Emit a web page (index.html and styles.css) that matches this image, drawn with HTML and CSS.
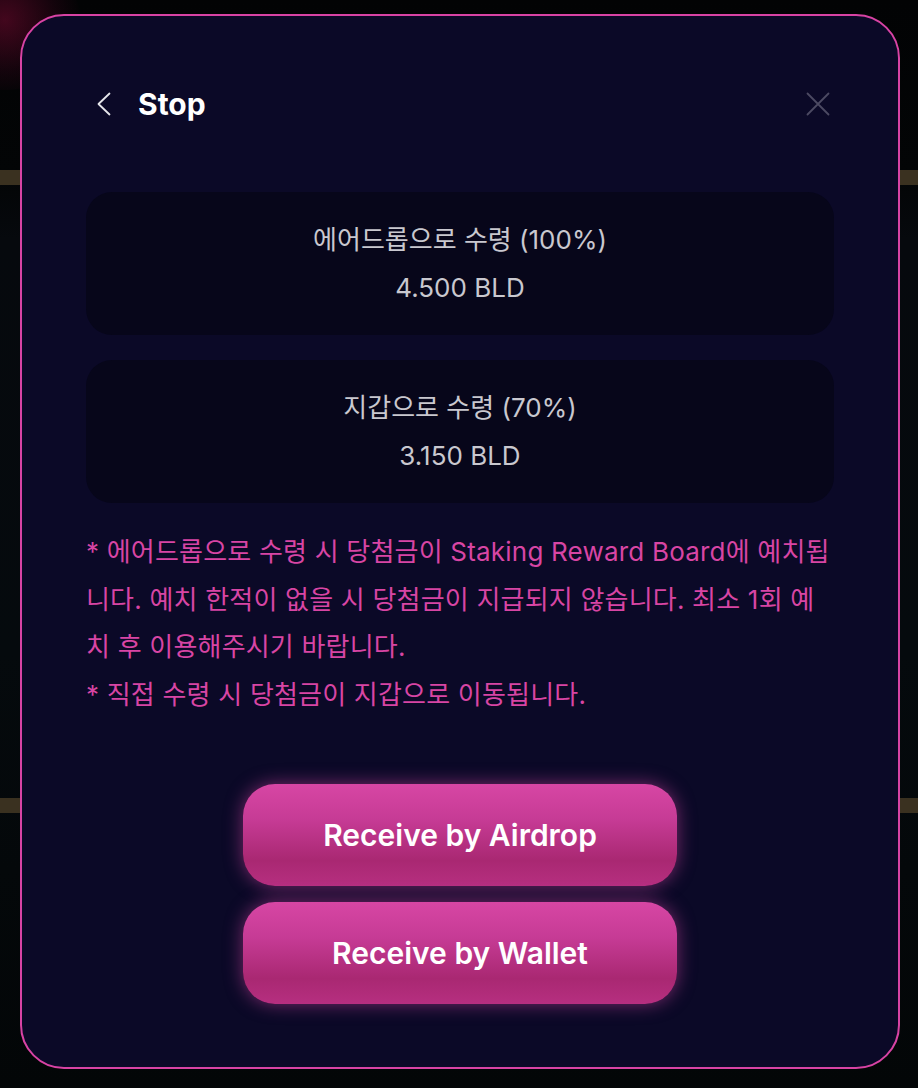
FILE: index.html
```html
<!DOCTYPE html>
<html lang="ko">
<head>
<meta charset="utf-8">
<title>Stop</title>
<link rel="stylesheet" href="styles.css">
</head>
<body>
<div class="backdrop">
  <div class="glow-blob"></div>
  <div class="band band-top"></div>
  <div class="band band-bottom"></div>
</div>
<div class="modal">
  <div class="header">
    <button class="icon-btn back" aria-label="back">
      <svg width="24" height="24" viewBox="0 0 24 24"><path d="M17.5 1.5 L6.5 12 L17.5 22.5" fill="none" stroke="#e6e6ea" stroke-width="1.8" stroke-linecap="round" stroke-linejoin="round"/></svg>
    </button>
    <h1 class="title">Stop</h1>
    <button class="icon-btn close" aria-label="close">
      <svg width="24" height="24" viewBox="0 0 24 24"><path d="M1.5 1.5 L22.5 22.5 M22.5 1.5 L1.5 22.5" fill="none" stroke="#4c4a62" stroke-width="1.8" stroke-linecap="round"/></svg>
    </button>
  </div>
  <div class="option">
    <div class="opt-label">에어드롭으로 수령 (100%)</div>
    <div class="opt-value">4.500 BLD</div>
  </div>
  <div class="option">
    <div class="opt-label">지갑으로 수령 (70%)</div>
    <div class="opt-value">3.150 BLD</div>
  </div>
  <div class="notes">
    <p>* 에어드롭으로 수령 시 당첨금이 Staking Reward Board에 예치됩니다. 예치 한적이 없을 시 당첨금이 지급되지 않습니다. 최소 1회 예치 후 이용해주시기 바랍니다.</p>
    <p>* 직접 수령 시 당첨금이 지갑으로 이동됩니다.</p>
  </div>
  <div class="actions">
    <button class="btn">Receive by Airdrop</button>
    <button class="btn">Receive by Wallet</button>
  </div>
</div>
</body>
</html>
```

FILE: styles.css
```css
* { box-sizing: border-box; }
html, body { margin: 0; padding: 0; }
body {
  width: 918px;
  height: 1088px;
  overflow: hidden;
  position: relative;
  background: linear-gradient(180deg, #020304 0%, #030506 16%, #06090d 22%, #050a0d 60%, #030607 100%);
  font-family: Inter, "Noto Sans CJK KR", sans-serif;
  padding: 14px 18px 0 20px;
}
.backdrop { position: absolute; inset: 0; z-index: 0; }
.glow-blob {
  position: absolute; left: -70px; top: -50px; width: 150px; height: 140px;
  border-radius: 50%;
  background: radial-gradient(circle, rgba(120,10,50,0.55) 0%, rgba(60,5,30,0.3) 50%, rgba(0,0,0,0) 75%);
}
.band { position: absolute; left: 0; right: 0; height: 15px; background: #3a3120; }
.band-top { top: 170px; }
.band-bottom { top: 798px; }
.modal {
  position: relative;
  z-index: 1;
  width: 880px;
  height: 1055px;
  background: #0b0927;
  border: 2px solid #d843a4;
  border-radius: 44px;
  padding: 58px 64px 0 64px;
  display: flex;
  flex-direction: column;
}
.header {
  height: 60px;
  display: flex;
  align-items: center;
  padding: 0 4px 0 6px;
  margin-bottom: 58px;
}
.icon-btn {
  background: none; border: 0; padding: 0; margin: 0;
  width: 24px; height: 24px; display: flex; cursor: pointer;
}
.title {
  margin: 0 0 0 22px;
  font-size: 30px;
  font-weight: 700;
  color: #ffffff;
  flex: 1;
}
.option {
  height: 143px;
  background: #07061a;
  border-radius: 26px;
  display: flex;
  flex-direction: column;
  justify-content: center;
  align-items: center;
  color: #c9c8cf;
  font-size: 26px;
  line-height: 48px;
  margin-bottom: 25px;
}
.notes {
  color: #d845a4;
  font-size: 26px;
  line-height: 47.7px;
  letter-spacing: 0.2px;
}
.notes p { margin: 0; }
.actions {
  margin-top: 65px;
  display: flex;
  flex-direction: column;
  align-items: center;
  gap: 16px;
}
.btn {
  width: 434px;
  height: 102px;
  border: 0;
  border-radius: 32px;
  background: linear-gradient(180deg, #d746a4 0%, #c63b95 35%, #a92872 75%, #b62f80 100%);
  box-shadow: 0 0 18px rgba(214, 70, 164, 0.55);
  color: #ffffff;
  font-family: Inter, "Noto Sans CJK KR", sans-serif;
  font-size: 30px;
  font-weight: 600;
  cursor: pointer;
}
```
